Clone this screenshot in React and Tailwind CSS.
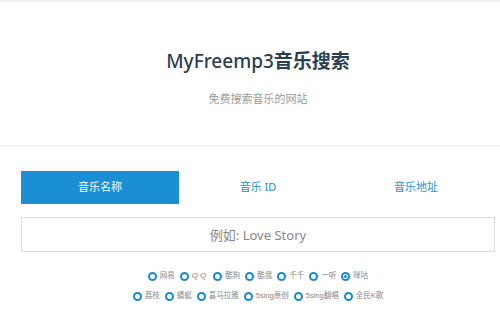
import { useState } from 'react';

const tabs = ['音乐名称', '音乐 ID', '音乐地址'];

const row1 = ['网易', 'QQ', '酷狗', '酷我', '千千', '一听', '咪咕'];
const row2 = ['荔枝', '蜻蜓', '喜马拉雅', '5sing原创', '5sing翻唱', '全民K歌'];

function Radio({ label, checked, onPick }) {
  return (
    <label className="flex items-center gap-[3px] cursor-pointer" onClick={onPick}>
      <span className="w-[9px] h-[9px] rounded-full border-[2px] border-[#1a88cc] flex items-center justify-center">
        {checked && <span className="w-[3px] h-[3px] rounded-full bg-[#1a88cc]" />}
      </span>
      <span
        className={
          label === 'QQ'
            ? "text-[8px] text-[#888] tracking-[2px] font-['Liberation_Sans','Noto_Sans_CJK_SC',sans-serif]"
            : "text-[7.5px] text-[#888] font-['Liberation_Sans','Noto_Sans_CJK_SC',sans-serif]"
        }
      >
        {label}
      </span>
    </label>
  );
}

export default function App() {
  const [tab, setTab] = useState(0);
  const [source, setSource] = useState('咪咕');

  return (
    <div className="w-full h-[310px] overflow-hidden bg-white border-t-2 border-[#f0f0f0] font-['Noto_Sans','Noto_Sans_CJK_SC',sans-serif]">
      {/* header */}
      <div className="h-[145px] flex flex-col items-center pt-[45px] pl-[16px] border-b-2 border-[#f4f4f4]">
        <h1 className="text-[19px] leading-[28px] text-[#2c3e50] font-medium">
          MyFreemp3<span className="font-bold">音乐搜索</span>
        </h1>
        <p className="mt-[16px] text-[11px] leading-[16px] text-[#999]">免费搜索音乐的网站</p>
      </div>

      <div className="pl-[21px] pr-[5px] pt-[24px]">
        {/* tabs */}
        <div className="grid grid-cols-3 h-[33px]">
          {tabs.map((t, i) => (
            <button
              key={t}
              onClick={() => setTab(i)}
              className={
                tab === i
                  ? 'bg-[#1b8fd4] text-white text-[11px]'
                  : 'bg-white text-[#1b8fd4] text-[11px]'
              }
            >
              {t}
            </button>
          ))}
        </div>

        {/* search input */}
        <input
          className="mt-[13px] w-full h-[35px] border border-[#dedede] text-center text-[13px] text-[#555] outline-none placeholder:text-[#888]"
          placeholder="例如: Love Story"
        />

        {/* sources */}
        <div className="mt-[18px] flex flex-col items-center gap-[8px]">
          <div className="flex items-center gap-[5px] h-[12px]">
            {row1.map((s) => (
              <Radio key={s} label={s} checked={source === s} onPick={() => setSource(s)} />
            ))}
          </div>
          <div className="flex items-center gap-[5px] h-[12px]">
            {row2.map((s) => (
              <Radio key={s} label={s} checked={source === s} onPick={() => setSource(s)} />
            ))}
          </div>
        </div>
      </div>
    </div>
  );
}
